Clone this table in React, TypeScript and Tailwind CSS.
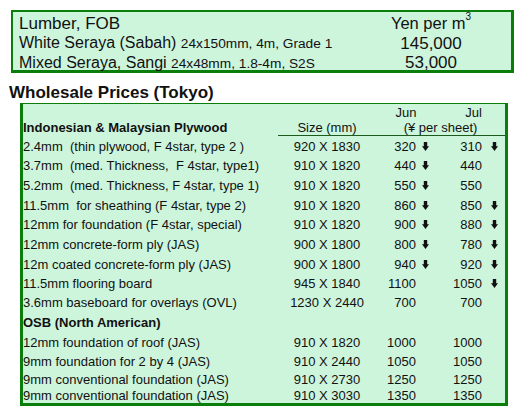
import React from "react";

const Arrow = () => (
  <svg width="7" height="9" viewBox="0 0 7 9" className="block">
    <path d="M1.8 0h3.4v4.2H7L3.5 9 0 4.2h1.8z" fill="#111" />
  </svg>
);

type Row = {
  label: string;
  bold?: boolean;
  size?: string;
  jun?: string;
  junDown?: boolean;
  jul?: string;
  julDown?: boolean;
  h: string;
};

const rows: Row[] = [
  { label: "2.4mm\u00a0 (thin plywood, F 4star, type 2 )", size: "920 X 1830", jun: "320", junDown: true, jul: "310", julDown: true, h: "h-[20px]" },
  { label: "3.7mm\u00a0 (med. Thickness,\u00a0 F 4star, type1)", size: "910 X 1820", jun: "440", junDown: true, jul: "440", h: "h-[19px]" },
  { label: "5.2mm\u00a0 (med. Thickness, F 4star, type 1)", size: "910 X 1820", jun: "550", junDown: true, jul: "550", h: "h-[20px]" },
  { label: "11.5mm\u00a0 for sheathing (F 4star, type 2)", size: "910 X 1820", jun: "860", junDown: true, jul: "850", julDown: true, h: "h-[20px]" },
  { label: "12mm for foundation (F 4star, special)", size: "910 X 1820", jun: "900", junDown: true, jul: "880", julDown: true, h: "h-[19px]" },
  { label: "12mm concrete-form ply (JAS)", size: "900 X 1800", jun: "800", junDown: true, jul: "780", julDown: true, h: "h-[20px]" },
  { label: "12m coated concrete-form ply (JAS)", size: "900 X 1800", jun: "940", junDown: true, jul: "920", julDown: true, h: "h-[20px]" },
  { label: "11.5mm flooring board", size: "945 X 1840", jun: "1100", jul: "1050", julDown: true, h: "h-[19px]" },
  { label: "3.6mm baseboard for overlays (OVL)", size: "1230 X 2440", jun: "700", jul: "700", h: "h-[19px]" },
  { label: "OSB (North American)", bold: true, h: "h-[20px]" },
  { label: "12mm foundation of roof (JAS)", size: "910 X 1820", jun: "1000", jul: "1000", h: "h-[20px]" },
  { label: "9mm foundation for 2 by 4 (JAS)", size: "910 X 2440", jun: "1050", jul: "1050", h: "h-[18px]" },
  { label: "9mm conventional foundation (JAS)", size: "910 X 2730", jun: "1250", jul: "1250", h: "h-[18px]" },
  { label: "9mm conventional foundation (JAS)", size: "910 X 3030", jun: "1350", jul: "1350", h: "h-[15px]" },
];

export default function App() {
  return (
    <div
      className="w-[519px] h-[411px] bg-white text-[#111] overflow-hidden"
      style={{ fontFamily: '"Liberation Sans", Arial, sans-serif' }}
    >
      {/* Top lumber box */}
      <div className="pt-[10px] pl-[11px]">
        <div className="w-[503px] h-[63px] border-2 border-b-[3px] border-r-[3px] border-[#0b7d0b] bg-[#cdf5dc] pt-px">
          <div className="grid grid-cols-[338px_160px] h-[20px] items-center">
            <div className="pl-[6px] text-[17px] leading-none">Lumber, FOB</div>
            <div className="text-center text-[16.5px] leading-none">
              Yen per m<span className="text-[10px] align-top relative -top-[3px]">3</span>
            </div>
          </div>
          <div className="grid grid-cols-[338px_160px] h-[20px] items-center">
            <div className="pl-[6px] leading-none whitespace-nowrap">
              <span className="text-[16px]">White Seraya (Sabah) </span>
              <span className="text-[13.7px]">24x150mm, 4m, Grade 1</span>
            </div>
            <div className="text-center text-[17px] leading-none">145,000</div>
          </div>
          <div className="grid grid-cols-[338px_160px] h-[19px] items-center">
            <div className="pl-[6px] leading-none whitespace-nowrap">
              <span className="text-[16px]">Mixed Seraya, Sangi </span>
              <span className="text-[13.7px]">24x48mm, 1.8-4m, S2S</span>
            </div>
            <div className="text-center text-[17px] leading-none">53,000</div>
          </div>
        </div>
      </div>

      {/* Heading */}
      <div className="mt-[10px] h-[20px] pl-[9px] text-[17px] font-bold leading-[20px]">
        Wholesale Prices (Tokyo)
      </div>

      {/* Wholesale table */}
      <div className="pl-[20px]">
        <div className="w-[488px] border-t border-l-[3px] border-r-[3px] border-b-[3px] border-[#0b7d0b] bg-[#cdf5dc] text-[13px] leading-[15px]">
          {/* header */}
          <div className="flex h-[32px]">
            <div className="w-[255px] flex items-end pb-[1px] font-bold whitespace-nowrap">
              Indonesian &amp; Malaysian Plywood
            </div>
            <div className="w-[227px] border-b border-[#1d5a1d] flex flex-col">
              <div className="flex h-[16px] items-center">
                <div className="w-[98px]" />
                <div className="w-[60px] text-center">Jun</div>
                <div className="w-[6px]" />
                <div className="w-[63px] text-center">Jul</div>
              </div>
              <div className="flex h-[15px] items-center">
                <div className="w-[98px] text-center">Size (mm)</div>
                <div className="w-[129px] text-center">(¥ per sheet)</div>
              </div>
            </div>
          </div>
          {rows.map((r, i) => (
            <div
              key={i}
              className={`grid grid-cols-[255px_98px_40px_24px_42px_23px] items-center ${r.h}`}
            >
              <div className={`whitespace-nowrap ${r.bold ? "font-bold" : ""}`}>{r.label}</div>
              <div className="text-center">{r.size ?? ""}</div>
              <div className="text-right">{r.jun ?? ""}</div>
              <div className="pl-[6px]">{r.junDown ? <Arrow /> : null}</div>
              <div className="text-right">{r.jul ?? ""}</div>
              <div className="pl-[9px]">{r.julDown ? <Arrow /> : null}</div>
            </div>
          ))}
        </div>
      </div>
    </div>
  );
}
